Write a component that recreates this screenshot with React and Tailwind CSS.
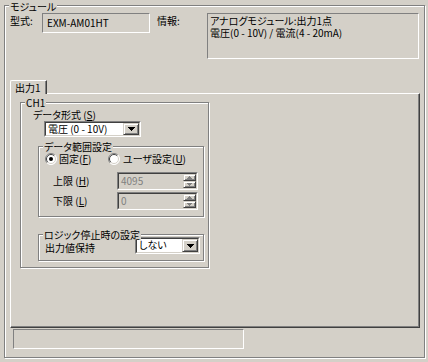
import React from "react";

const Group = ({ title, className = "", top = "top-[-6px]", children }) => (
  <div className={`relative border border-[#808080] shadow-[inset_1px_1px_0_#fff,1px_1px_0_#fff] ${className}`}>
    <span className={`absolute left-[4px] ${top} bg-[#d4d0c8] px-[1px] leading-[11px]`}>{title}</span>
    {children}
  </div>
);

const Arrow = ({ color = "#000" }) => (
  <svg width="7" height="4" viewBox="0 0 7 4">
    <path d="M0 0h7v1h-1v1h-1v1h-1v1h-1v-1h-1v-1h-1v-1h-1z" fill={color} />
  </svg>
);

const Combo = ({ value, className = "" }) => (
  <div className={`flex border border-t-[#808080] border-l-[#808080] border-b-white border-r-white ${className}`}>
    <div className="flex flex-1 border border-t-[#404040] border-l-[#404040] border-b-[#d4d0c8] border-r-[#d4d0c8] bg-white">
      <span className="flex-1 pl-[2px] leading-[12px]">{value}</span>
      <div className="flex w-[16px] items-center justify-center border border-t-[#d4d0c8] border-l-[#d4d0c8] border-b-[#404040] border-r-[#404040] bg-[#d4d0c8] shadow-[inset_1px_1px_0_#fff,inset_-1px_-1px_0_#808080]">
        <Arrow />
      </div>
    </div>
  </div>
);

const SpinBtn = ({ up }) => (
  <div className="flex flex-1 items-center justify-center border border-t-[#d4d0c8] border-l-[#d4d0c8] border-b-[#404040] border-r-[#404040] bg-[#d4d0c8] shadow-[inset_1px_1px_0_#fff,inset_-1px_-1px_0_#808080]">
    <svg width="5" height="3" viewBox="0 0 5 3" className={up ? "rotate-180" : ""}>
      <path d="M0 0h5v1h-1v1h-1v1h-1v-1h-1v-1h-1z" fill="#808080" />
    </svg>
  </div>
);

const Spin = ({ value }) => (
  <div className="flex h-[18px] w-[81px] border border-t-[#808080] border-l-[#808080] border-b-white border-r-white">
    <div className="flex flex-1 border border-t-[#404040] border-l-[#404040] border-b-[#d4d0c8] border-r-[#d4d0c8] bg-[#d4d0c8]">
      <span className="flex-1 pl-[2px] pt-[1px] leading-[12px] text-[#808080]">{value}</span>
      <div className="flex w-[13px] flex-col">
        <SpinBtn up />
        <SpinBtn />
      </div>
    </div>
  </div>
);

const Radio = ({ checked }) => (
  <svg width="12" height="12" viewBox="0 0 12 12">
    <circle cx="6" cy="6" r="5.5" fill="#fff" />
    <path d="M2.1 9.9A5.5 5.5 0 0 1 9.9 2.1" stroke="#808080" fill="none" />
    <path d="M9.9 2.1A5.5 5.5 0 0 1 2.1 9.9" stroke="#fff" fill="none" />
    <path d="M2.8 9.2A4.5 4.5 0 0 1 9.2 2.8" stroke="#404040" fill="none" />
    <path d="M9.2 2.8A4.5 4.5 0 0 1 2.8 9.2" stroke="#d4d0c8" fill="none" />
    {checked && <circle cx="6" cy="6" r="2" fill="#000" />}
  </svg>
);

const App = () => {
  return (
    <div className="h-[362px] w-[428px] bg-[#d4d0c8] pb-[4px] pl-[4px] pr-[3px] pt-[5px] font-['Noto_Sans_CJK_JP','Liberation_Sans',sans-serif] text-[10px] leading-[12px] text-black [font-feature-settings:'palt']">
      <Group title="モジュール" top="top-[-5px]" className="h-[353px]">
        <div className="flex pl-[5px] pt-[7px]">
          <span className="w-[32px] pt-[2px]">型式:</span>
          <div className="h-[20px] w-[108px] border border-t-[#808080] border-l-[#808080] border-b-white border-r-white pl-[4px] pt-[3px]">
            EXM-AM01HT
          </div>
          <span className="ml-[7px] w-[50px] pt-[2px]">情報:</span>
          <div className="h-[46px] w-[212px] border border-t-[#808080] border-l-[#808080] border-b-white border-r-white pl-[2px] pt-[1px]">
            <div>アナログモジュール:出力1点</div>
            <div>電圧(0 - 10V) / 電流(4 - 20mA)</div>
          </div>
        </div>

        <div className="ml-[5px] mt-[21px] w-[410px]">
          <div className="relative z-10 -mb-[1px] h-[14px] w-[37px] rounded-tl-[2px] border-l border-t border-r border-l-white border-t-white border-r-[#404040] bg-[#d4d0c8] pl-[4px] pt-[1px] shadow-[inset_-1px_0_0_#808080]">
            出力1
          </div>
          <div className="h-[235px] border border-l-white border-t-white border-r-[#404040] border-b-[#404040] pl-[9px] pt-[8px] shadow-[inset_-1px_-1px_0_#808080]">
            <Group title="CH1" className="w-[189px] pb-[6px]">
              <div className="ml-[12px] mt-[6px]">データ形式 (<u>S</u>)</div>
              <Combo value="電圧 (0 - 10V)" className="ml-[23px] h-[16px] w-[97px]" />

              <Group title="データ範囲設定" className="ml-[17px] mt-[9px] w-[166px] pb-[6px]">
                <div className="ml-[6px] mt-[6px] flex h-[12px] items-center">
                  <div className="flex w-[63px] items-center gap-[2px]">
                    <Radio checked />
                    <span>固定(<u>F</u>)</span>
                  </div>
                  <div className="flex items-center gap-[3px]">
                    <Radio />
                    <span>ユーザ設定(<u>U</u>)</span>
                  </div>
                </div>
                <div className="ml-[14px] mt-[7px] flex flex-col gap-[2px]">
                  <div className="flex items-center">
                    <span className="w-[64px]">上限 (<u>H</u>)</span>
                    <Spin value="4095" />
                  </div>
                  <div className="flex items-center">
                    <span className="w-[64px]">下限 (<u>L</u>)</span>
                    <Spin value="0" />
                  </div>
                </div>
              </Group>

              <Group title="ロジック停止時の設定" className="ml-[17px] mt-[17px] w-[166px] pb-[6px]">
                <div className="ml-[6px] mt-[2px] flex items-center">
                  <span className="w-[90px] pt-[5px]">出力値保持</span>
                  <Combo value="しない" className="h-[17px] w-[65px]" />
                </div>
              </Group>
            </Group>
          </div>
          <div className="ml-[3px] mt-[1px] h-[20px] w-[231px] border border-t-[#808080] border-l-[#808080] border-b-white border-r-white" />
        </div>
      </Group>
    </div>
  );
};

export default App;
